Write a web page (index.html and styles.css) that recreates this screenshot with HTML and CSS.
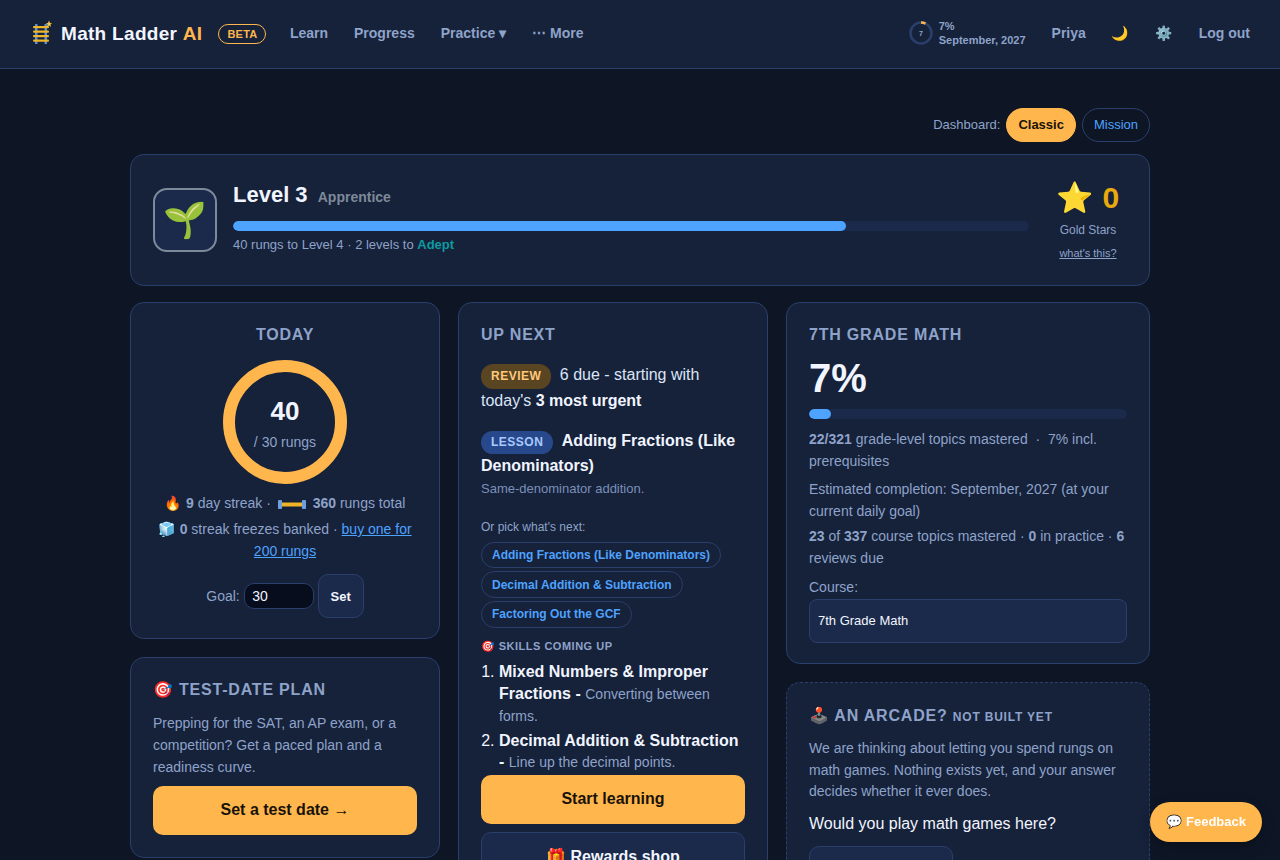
FILE: index.html
```html
<!DOCTYPE html>
<html lang="en">
<head>
    <meta charset="UTF-8">
    <meta name="viewport" content="width=device-width, initial-scale=1.0">
    <title>Math Ladder AI</title>
    <link rel="stylesheet" href="styles.css">
</head>
<body>
    <header class="topbar">
        <a class="brand">
            <svg class="brand-icon" width="20" height="24" viewBox="0 0 20 24">
                <rect x="3" y="4" width="2.5" height="20" fill="#5b8fd0"/>
                <rect x="12.5" y="4" width="2.5" height="20" fill="#5b8fd0"/>
                <rect x="1" y="6" width="16" height="2.2" rx="1" fill="#f0b429"/>
                <rect x="1" y="10.5" width="16" height="2.2" rx="1" fill="#f0b429"/>
                <rect x="1" y="15" width="16" height="2.2" rx="1" fill="#f0b429"/>
                <rect x="1" y="19.5" width="16" height="2.2" rx="1" fill="#f0b429"/>
                <polygon points="17,0.5 18,3 20,3.2 18.4,4.6 19,7 17,5.6 15,7 15.6,4.6 14,3.2 16,3" fill="#f7c948"/>
            </svg>
            Math Ladder&nbsp;<span class="brand-ai">AI</span>
        </a>
        <span class="beta">BETA</span>
        <nav class="nav">
            <a>Learn</a>
            <a>Progress</a>
            <a>Practice ▾</a>
            <a>⋯ More</a>
        </nav>
        <div class="topbar-right">
            <div class="mini-progress">
                <svg class="mini-ring" width="24" height="24" viewBox="0 0 24 24">
                    <circle cx="12" cy="12" r="10.5" fill="none" stroke="#2a3f6b" stroke-width="2.5"/>
                    <circle cx="12" cy="12" r="10.5" fill="none" stroke="#ffb74d" stroke-width="2.5" stroke-dasharray="4.6 61.4" transform="rotate(-90 12 12)"/>
                    <text x="12" y="14.5" text-anchor="middle" class="mini-ring-text">7</text>
                </svg>
                <div class="mini-text"><div>7%</div><div>September, 2027</div></div>
            </div>
            <a>Priya</a>
            <a class="emoji-btn">🌙</a>
            <a class="emoji-btn">⚙️</a>
            <a>Log out</a>
        </div>
    </header>

    <main class="page">
        <div class="dash-toggle">
            <span>Dashboard:</span>
            <a class="pill active">Classic</a>
            <a class="pill">Mission</a>
        </div>

        <section class="card level-card">
            <div class="level-badge">🌱</div>
            <div class="level-main">
                <div class="level-title">Level 3 <span class="level-name">Apprentice</span></div>
                <div class="bar level-bar"><div class="bar-fill" style="width: 77%"></div></div>
                <div class="level-sub">40 rungs to Level 4 · 2 levels to <b class="adept">Adept</b></div>
            </div>
            <div class="stars">
                <div class="stars-count">⭐ 0</div>
                <div class="stars-label">Gold Stars</div>
                <a class="stars-link">what's this?</a>
            </div>
        </section>

        <div class="columns">
            <div class="col">
                <section class="card today">
                    <h3>TODAY</h3>
                    <div class="ring">
                        <div class="ring-num">40</div>
                        <div class="ring-sub">/ 30 rungs</div>
                    </div>
                    <p class="today-line">🔥 <b>9</b> day streak ·
                        <svg class="rung-icon" width="28" height="9" viewBox="0 0 28 9">
                            <rect x="0" y="0" width="4" height="9" rx="1" fill="#6ea0e0"/>
                            <rect x="24" y="0" width="4" height="9" rx="1" fill="#6ea0e0"/>
                            <rect x="4" y="2.5" width="20" height="4" fill="#f0b429"/>
                        </svg>
                        <b>360</b> rungs total</p>
                    <p class="today-line">🧊 <b>0</b> streak freezes banked · <a class="link">buy one for 200 rungs</a></p>
                    <div class="goal">
                        <label for="goal">Goal:</label>
                        <input id="goal" type="text" value="30">
                        <button class="btn-small">Set</button>
                    </div>
                </section>
                <section class="card plan">
                    <h3>🎯 TEST-DATE PLAN</h3>
                    <p class="body-text">Prepping for the SAT, an AP exam, or a competition? Get a paced plan and a readiness curve.</p>
                    <button class="btn-primary">Set a test date →</button>
                </section>
            </div>

            <div class="col">
                <section class="card upnext">
                    <h3>UP NEXT</h3>
                    <p class="next-item"><span class="tag tag-review">REVIEW</span> 6 due - starting with today's <b>3 most urgent</b></p>
                    <p class="next-item lesson"><span class="tag tag-lesson">LESSON</span> <b>Adding Fractions (Like Denominators)</b></p>
                    <p class="next-desc">Same-denominator addition.</p>
                    <p class="pick-label">Or pick what's next:</p>
                    <div class="chips">
                        <a class="chip">Adding Fractions (Like Denominators)</a>
                        <a class="chip">Decimal Addition &amp; Subtraction</a>
                        <a class="chip">Factoring Out the GCF</a>
                    </div>
                    <div class="skills-head">🎯 SKILLS COMING UP</div>
                    <ol class="skills">
                        <li><b>Mixed Numbers &amp; Improper Fractions -</b> <span>Converting between forms.</span></li>
                        <li><b>Decimal Addition &amp; Subtraction -</b> <span>Line up the decimal points.</span></li>
                        <li><b>Factoring Out the GCF -</b> <span>Pull out the biggest factor.</span></li>
                    </ol>
                    <button class="btn-primary">Start learning</button>
                    <button class="btn-secondary">🎁 Rewards shop</button>
                </section>
            </div>

            <div class="col">
                <section class="card course">
                    <h3>7TH GRADE MATH</h3>
                    <div class="course-pct">7%</div>
                    <div class="bar course-bar"><div class="bar-fill" style="width: 7%"></div></div>
                    <p class="body-text course-topics"><b>22/321</b> grade-level topics mastered &nbsp;·&nbsp; 7% incl. prerequisites</p>
                    <p class="body-text course-eta">Estimated completion: September, 2027 (at your current daily goal)</p>
                    <p class="body-text"><b>23</b> of <b>337</b> course topics mastered · <b>0</b> in practice · <b>6</b> reviews due</p>
                    <label class="course-label" for="course">Course:</label>
                    <div id="course" class="course-select">7th Grade Math</div>
                </section>
                <section class="card arcade">
                    <h3>🕹️ AN ARCADE? <small>NOT BUILT YET</small></h3>
                    <p class="body-text">We are thinking about letting you spend rungs on math games. Nothing exists yet, and your answer decides whether it ever does.</p>
                    <p class="arcade-q">Would you play math games here?</p>
                    <button class="btn-vote">Yes, I would</button>
                </section>
            </div>
        </div>
    </main>

    <a class="feedback">💬 Feedback</a>
</body>
</html>
```

FILE: styles.css
```css
html, body {
    margin: 0;
    padding: 0;
    height: 860px;
    overflow: hidden;
    background-color: #0e1626;
    color: #f1f5ff;
    font-family: "Liberation Sans", Arial, "Noto Color Emoji", sans-serif;
}

a {
    cursor: pointer;
}

/* Top bar */
.topbar {
    display: flex;
    align-items: center;
    box-sizing: border-box;
    height: 69px;
    padding: 0 30px 3px 30px;
    background-color: #16213a;
    border-bottom: 1px solid #2a3f6b;
}

.brand {
    display: flex;
    align-items: center;
    margin-top: 2px;
    font-size: 19px;
    font-weight: bold;
    letter-spacing: 0.3px;
    color: #f1f5ff;
}

.brand-icon {
    margin: -3px 9px 0 2px;
}

.brand-ai {
    color: #ffb74d;
}

.beta {
    margin-top: 2px;
    margin-left: 16px;
    padding: 3px 8px;
    font-size: 11px;
    font-weight: bold;
    letter-spacing: 0.2px;
    color: #ffb74d;
    border: 1px solid #ffb74d;
    border-radius: 12px;
}

.nav {
    display: flex;
    gap: 26px;
    margin-left: 23.5px;
    font-size: 14px;
    font-weight: bold;
    color: #8ea3c9;
}

.topbar-right {
    display: flex;
    align-items: center;
    gap: 26px;
    margin-left: auto;
    font-size: 14px;
    font-weight: bold;
    color: #8ea3c9;
}

.mini-progress {
    display: flex;
    align-items: center;
    gap: 6px;
}

.mini-ring-text {
    font-size: 7px;
    fill: #8ea3c9;
}

.mini-text {
    font-size: 11px;
    line-height: 14px;
}

/* Page */
.page {
    width: 1020px;
    margin: 0 auto;
    padding-top: 39px;
}

.dash-toggle {
    display: flex;
    justify-content: flex-end;
    align-items: center;
    gap: 6px;
    margin-bottom: 12px;
    font-size: 13px;
    line-height: 14px;
    color: #8ea3c9;
}

.pill {
    padding: 9px 11px;
    line-height: 14px;
    color: #4da3ff;
    border: 1px solid #2a3f6b;
    border-radius: 17px;
}

.pill.active {
    font-weight: bold;
    color: #1a1208;
    background-color: #ffb74d;
    border-color: #ffb74d;
}

.card {
    padding: 22px;
    background-color: #16213a;
    border: 1px solid #2a3f6b;
    border-radius: 14px;
}

.card h3 {
    margin: 0 0 11px 0;
    font-size: 16px;
    font-weight: bold;
    line-height: 20px;
    letter-spacing: 0.8px;
    color: #8ea3c9;
}

.body-text {
    margin: 0 0 5.5px 0;
    font-size: 14px;
    line-height: 21.7px;
    color: #8ea3c9;
}

/* Level card */
.level-card {
    display: flex;
    align-items: center;
    gap: 16px;
    height: 132px;
    box-sizing: border-box;
    margin-bottom: 16px;
}

.level-badge {
    display: flex;
    align-items: center;
    justify-content: center;
    width: 60px;
    height: 60px;
    font-size: 35px;
    background-color: #1b2a4a;
    border: 2px solid #7d8a99;
    border-radius: 14px;
}

.level-main {
    flex: 1;
    padding-bottom: 7px;
}

.level-title {
    font-size: 22px;
    font-weight: bold;
}

.level-name {
    margin-left: 4px;
    font-size: 14px;
    color: #7d8a99;
}

.bar {
    background-color: #1b2a4a;
    border-radius: 5px;
    overflow: hidden;
}

.bar-fill {
    height: 100%;
    background-color: #4da3ff;
    border-radius: 5px;
}

.level-bar {
    height: 10px;
    margin: 13px 0 6px 0;
}

.level-sub {
    font-size: 13px;
    color: #8ea3c9;
}

.adept {
    color: #0d9aa0;
}

.stars {
    flex: none;
    width: 78px;
    margin-left: 4px;
    text-align: center;
    font-size: 12px;
    color: #8ea3c9;
}

.stars-count {
    font-size: 30px;
    font-weight: bold;
    white-space: nowrap;
    color: #e9a90e;
}

.stars-label {
    margin: 8px 0 9px 0;
}

.stars-link {
    font-size: 11px;
    text-decoration: underline;
}

/* Columns */
.columns {
    display: grid;
    grid-template-columns: 310px 310px 364px;
    gap: 18px;
}

.col {
    display: flex;
    flex-direction: column;
    gap: 18px;
}

/* Today */
.today {
    padding-bottom: 20px;
    text-align: center;
    font-size: 14px;
    color: #8ea3c9;
}

.today h3 {
    margin-bottom: 15px;
}

.ring {
    display: flex;
    flex-direction: column;
    align-items: center;
    justify-content: center;
    box-sizing: border-box;
    width: 124px;
    height: 124px;
    margin: 0 auto 8px auto;
    padding-top: 2px;
    border: 12px solid #ffb74d;
    border-radius: 50%;
}

.ring-num {
    font-size: 26px;
    font-weight: bold;
    color: #f1f5ff;
}

.ring-sub {
    margin-top: 7px;
    font-size: 14px;
}

.today-line {
    margin: 0 0 4px 0;
    line-height: 22px;
}

.rung-icon {
    margin: 0 3px;
    vertical-align: -1px;
}

.link {
    color: #4da3ff;
    text-decoration: underline;
}

.goal {
    display: flex;
    align-items: center;
    justify-content: center;
    gap: 4px;
    margin-top: 12px;
}

.goal input {
    box-sizing: border-box;
    width: 70px;
    height: 26px;
    padding: 0 7.5px;
    font-family: inherit;
    font-size: 14px;
    color: #f1f5ff;
    background-color: #070d1c;
    border: 1px solid #2a3f6b;
    border-radius: 10px;
}

.btn-small {
    width: 46px;
    height: 44px;
    font-family: inherit;
    font-size: 13px;
    font-weight: bold;
    color: #f1f5ff;
    background-color: #1b2a4a;
    border: 1px solid #2a3f6b;
    border-radius: 10px;
}

.btn-primary {
    display: block;
    width: 100%;
    height: 49px;
    padding-bottom: 3px;
    font-family: inherit;
    font-size: 16px;
    font-weight: bold;
    color: #1a1208;
    background-color: #ffb74d;
    border: none;
    border-radius: 10px;
}

.btn-secondary {
    display: block;
    width: 100%;
    height: 49px;
    margin-top: 8px;
    font-family: inherit;
    font-size: 16px;
    font-weight: bold;
    color: #f1f5ff;
    background-color: #1b2a4a;
    border: 1px solid #2a3f6b;
    border-radius: 10px;
}

/* Test-date plan */
.plan h3 {
    margin-bottom: 12px;
}

.plan .body-text {
    margin-bottom: 8px;
    line-height: 22px;
}

/* Up next */
.upnext h3 {
    margin-bottom: 18px;
}

.next-item {
    margin: 0 0 16px 0;
    font-size: 16px;
    line-height: 24px;
    color: #dbe5f7;
}

.next-item b {
    color: #f1f5ff;
}

.next-item.lesson {
    margin-bottom: 0;
}

.tag {
    display: inline-block;
    margin-right: 4px;
    padding: 0 10px;
    font-size: 12px;
    font-weight: bold;
    letter-spacing: 0.5px;
    border-radius: 12px;
}

.tag-review {
    line-height: 25px;
    color: #ffc97a;
    background-color: #5a4523;
}

.tag-lesson {
    line-height: 23px;
    color: #a9c9ff;
    background-color: #27488a;
}

.next-desc {
    margin: 3px 0 24px 0;
    font-size: 13px;
    color: #7a90b8;
}

.pick-label {
    margin: 0 0 7.5px 0;
    font-size: 12px;
    color: #8ea3c9;
}

.chips {
    display: flex;
    flex-direction: column;
    align-items: flex-start;
    gap: 3px;
}

.chip {
    padding: 5.4px 10px;
    font-size: 12px;
    font-weight: bold;
    line-height: 14px;
    color: #4da3ff;
    border: 1px solid #2a3f6b;
    border-radius: 14px;
}

.skills-head {
    margin: 12.4px 0 8px 0;
    font-size: 11px;
    font-weight: bold;
    letter-spacing: 0.5px;
    color: #8ea3c9;
}

.skills {
    height: 109px;
    margin: 0 0 5px 0;
    padding: 0 0 0 18px;
    overflow: hidden;
    font-size: 16px;
    line-height: 21.5px;
    color: #f1f5ff;
}

.skills li {
    margin-bottom: 2px;
}

.skills li span {
    font-size: 14px;
    color: #8ea3c9;
}

/* Course */
.course {
    padding-bottom: 20px;
}

.course-pct {
    font-size: 40px;
    font-weight: bold;
    margin-bottom: 8px;
}

.course-bar {
    height: 10px;
    margin-bottom: 10px;
}

.course-topics {
    margin-bottom: 6.5px;
}

.course-eta {
    margin-bottom: 3.5px;
}

.course-label {
    display: block;
    font-size: 14px;
    color: #8ea3c9;
    margin: 10px 0 4px 0;
}

.course-select {
    box-sizing: border-box;
    height: 44px;
    padding: 0 8px;
    font-size: 13px;
    line-height: 42px;
    color: #f1f5ff;
    background-color: #1b2a4a;
    border: 1px solid #2a3f6b;
    border-radius: 8px;
}

/* Arcade */
.arcade {
    padding-top: 23px;
    border-style: dashed;
}

.arcade small {
    font-size: 12px;
}

.arcade .body-text {
    line-height: 21.5px;
}

.arcade-q {
    margin: 12.5px 0 13px 0;
    font-size: 16px;
}

.btn-vote {
    width: 144px;
    height: 44px;
    font-family: inherit;
    font-weight: bold;
    color: #f1f5ff;
    background-color: #1b2a4a;
    border: 1px solid #2a3f6b;
    border-radius: 10px;
}

.feedback {
    position: fixed;
    right: 18px;
    bottom: 18px;
    padding: 13px 16px;
    font-size: 13px;
    font-weight: bold;
    line-height: 14px;
    color: #fff;
    background-color: #ffb74d;
    border-radius: 20px;
    box-shadow: 0 4px 12px rgba(0, 0, 0, 0.35);
}
```
